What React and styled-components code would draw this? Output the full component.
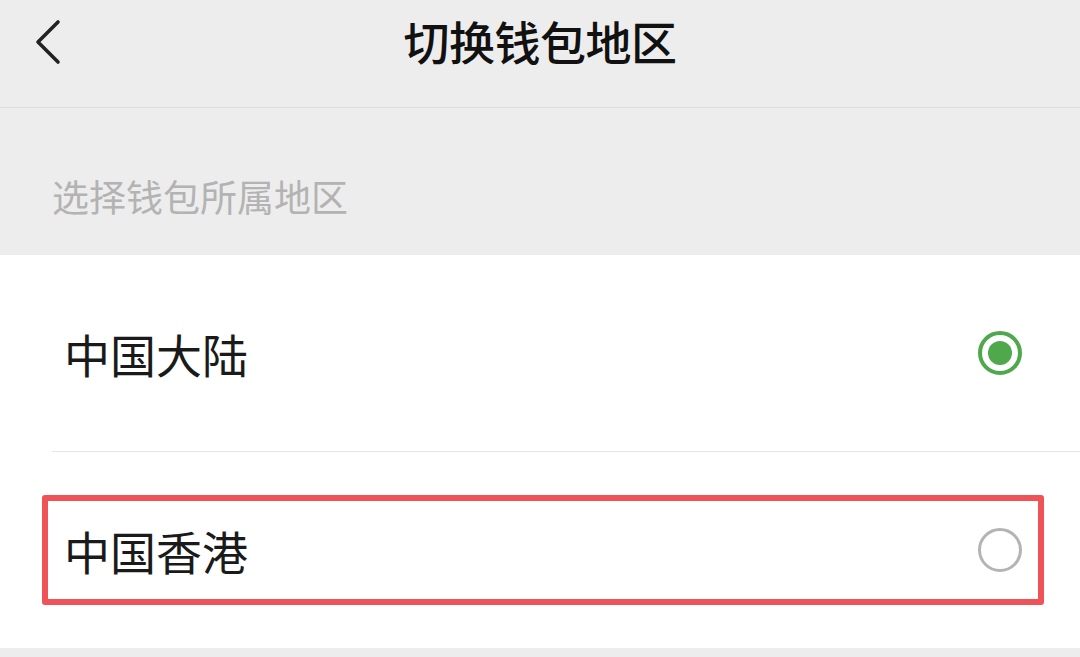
import { Fragment } from "react";
import styled, { createGlobalStyle } from "styled-components";

const GlobalStyle = createGlobalStyle`
  html, body {
    margin: 0;
    padding: 0;
    background: #ededed;
    font-family: "Noto Sans CJK SC", "Noto Sans", sans-serif;
  }
`;

const Page = styled.div`
  width: 1080px;
  height: 657px;
  background: #ededed;
  overflow: hidden;
`;

const Header = styled.div`
  height: 108px;
  display: grid;
  grid-template-columns: 120px 1fr 120px;
  align-items: center;
  border-bottom: 1px solid #dcdcdc;
  box-sizing: border-box;
`;

const Back = styled.div`
  display: flex;
  align-items: center;
  padding-left: 32px;
  height: 100%;
  margin-top: -22px;
`;

const Title = styled.h1`
  margin: 0;
  margin-top: -28px;
  text-align: center;
  font-size: 46px;
  font-weight: 500;
  color: #111;
  letter-spacing: -0.5px;
`;

const Section = styled.div`
  height: 147px;
  display: flex;
  align-items: center;
  padding-left: 52px;
  padding-top: 28px;
  box-sizing: border-box;
  font-size: 37px;
  color: #b3b3b3;
`;

const List = styled.div`
  background: #fff;
  height: 393px;
  display: flex;
  flex-direction: column;
`;

const Row = styled.div`
  position: relative;
  flex: 1;
  display: flex;
  align-items: center;
  justify-content: space-between;
  padding: 0 58px 0 64px;
  font-size: 46px;
  color: #1a1a1a;

  ${(p) =>
    p.$marked &&
    `
    &::after {
      content: "";
      position: absolute;
      left: 42px;
      right: 36px;
      top: 43px;
      bottom: 43px;
      border: 6px solid #ef5358;
      border-radius: 3px;
    }
  `}
`;

const Divider = styled.div`
  height: 1px;
  margin-left: 52px;
  background: #e6e6e6;
`;

const Radio = styled.div`
  width: 44px;
  height: 44px;
  box-sizing: border-box;
  border-radius: 50%;
  border: ${(p) => (p.$on ? "4px solid #4fa84b" : "3px solid #b4b4b4")};
  display: flex;
  align-items: center;
  justify-content: center;

  &::before {
    content: "";
    width: 24px;
    height: 24px;
    border-radius: 50%;
    background: ${(p) => (p.$on ? "#4fa84b" : "transparent")};
  }
`;

const Chevron = () => (
  <svg width="36" height="48" viewBox="0 0 36 48">
    <path
      d="M26 3 L6 23 L26 43"
      fill="none"
      stroke="#222"
      strokeWidth="3.6"
      strokeLinecap="round"
      strokeLinejoin="round"
    />
  </svg>
);

const regions = [
  { name: "中国大陆", on: true },
  { name: "中国香港", on: false, marked: true },
];

const App = () => {
  return (
    <Page>
      <GlobalStyle />
      <Header>
        <Back>
          <Chevron />
        </Back>
        <Title>切换钱包地区</Title>
        <div />
      </Header>
      <Section>选择钱包所属地区</Section>
      <List>
        {regions.map((r, i) => (
          <Fragment key={r.name}>
            {i > 0 && <Divider />}
            <Row $marked={r.marked}>
              <span>{r.name}</span>
              <Radio $on={r.on} />
            </Row>
          </Fragment>
        ))}
      </List>
    </Page>
  );
};

export default App;
